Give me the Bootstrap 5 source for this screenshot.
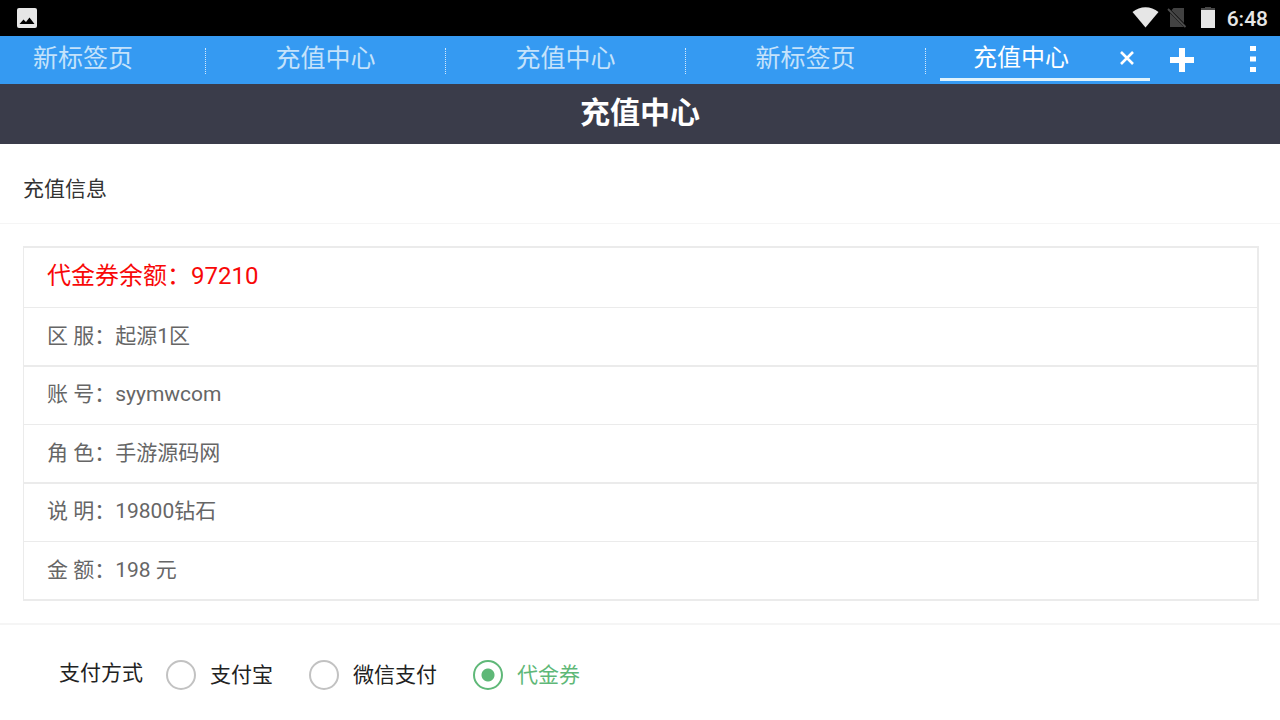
<!DOCTYPE html>
<html lang="zh-CN">
<head>
<meta charset="utf-8">
<meta name="viewport" content="width=device-width, initial-scale=1">
<title>充值中心</title>
<link href="https://cdn.jsdelivr.net/npm/bootstrap@5.3.0/dist/css/bootstrap.min.css" rel="stylesheet">
<style>
body { font-family: Roboto, "Noto Sans CJK SC", sans-serif; font-size: 21px; line-height: 30px; color: #333; background: #fff; }
.status-bar { height: 36px; background: #000; color: #e6e6e6; padding: 0 12px 0 17px; }
.clock { font-size: 21px; font-weight: 500; line-height: 36px; padding-top: 2px; }
.tab-strip { height: 48px; background: #359af2; }
.tab-strip button { border: 0; background: none; padding: 0; color: #fff; }
.tab-strip .page-tab { flex: 239 1 0; height: 48px; font-size: 25px; line-height: 36px; padding-bottom: 2px; color: #c4e2fb; }
.tab-strip .first-tab { flex-grow: 205; text-align: left; text-indent: 33px; }
.tab-rule { width: 0; height: 26px; margin-top: 12px; border-left: 1px dotted #d3eafd; }
.active-tab { width: 210px; height: 45px; margin-left: 14px; padding: 2px 15px 0 33px; border-bottom: 3px solid #def2fd; }
.tab-strip .active-name { font-size: 24px; line-height: 36px; }
.add-tab { margin-left: 20px; }
.more-menu { margin: 0 24px 0 56px; }
.title-bar { background: #3a3c4a; color: #fff; height: 60px; font-size: 30px; font-weight: 700; line-height: 58px; }
.section-head { padding: 30px 23px 19px; border-bottom: 1px solid #f5f5f5; font-size: 21px; line-height: 30px; }
.info-wrap { padding: 22px 21px 22px 23px; border-bottom: 2px solid #f5f5f5; }
.info-list { --bs-list-group-border-radius: 0; border: solid #ebebeb; border-width: 2px 2px 2px 1px; }
.info-list .list-group-item { border: 0; padding: 13px 23px 14px; color: #666; line-height: 30px; }
.info-list .list-group-item + .list-group-item { border-top: 1px solid #ebebeb; }
.info-list .list-group-item:nth-child(odd):not(:first-child) { border-top-width: 2px; padding: 12px 23px 15px; }
.info-list .balance { font-size: 24px; color: #f80808; padding-bottom: 16px; }
.pay-form { padding: 33px 23px 30px 59px; color: #222; }
.pay-label { margin-right: 23px; font-size: 21px; line-height: 30px; }
.pay-option { margin-right: 36px; gap: 14px; padding-top: 2px; }
.pay-option .form-check-input { width: 30px; height: 30px; margin: 0; border: 2px solid #c2c2c2; background: #fff; flex: none; }
.pay-option .form-check-input:checked { border-color: #5fb878; background: radial-gradient(circle, #5fb878 6px, #fff 7px); }
.pay-option .form-check-input:checked + label { color: #5fb878; }
</style>
</head>
<body>
<div class="status-bar d-flex align-items-center">
  <svg width="20" height="20" viewBox="0 0 20 20" aria-hidden="true"><rect width="20" height="20" rx="2" fill="#e6e6e6"/><path d="M2.500 16 6.500 11.500l2.500 2.500 3.500-4.500L17.500 16z" fill="#000"/></svg>
  <div class="ms-auto d-flex align-items-center">
    <svg width="27" height="22" viewBox="0 0 27 22" aria-hidden="true"><path d="M.5 5C8-1.300 19-1.300 26.500 5L13.500 20.500z" fill="#e6e6e6"/></svg>
    <svg class="ms-2" width="20" height="22" viewBox="0 0 20 22" aria-hidden="true"><path d="M6.500 1H17v19H3V5z" fill="#424242"/><path d="M2 3l18 18" stroke="#000" stroke-width="3"/><path d="M1 2l17.500 18" stroke="#4c4c4c" stroke-width="1.800"/></svg>
    <svg width="14" height="22" viewBox="0 0 14 22" style="margin-left:14px" aria-hidden="true"><path d="M4 0h6v2H4zM0 1h14v2H0z" fill="#484848"/><path d="M0 3h14v18H0z" fill="#e6e6e6"/></svg>
    <span class="clock ps-1 ms-2">6:48</span>
  </div>
</div>

<nav class="tab-strip d-flex align-items-start" aria-label="标签页">
  <button type="button" class="page-tab first-tab">新标签页</button><span class="tab-rule"></span>
  <button type="button" class="page-tab">充值中心</button><span class="tab-rule"></span>
  <button type="button" class="page-tab">充值中心</button><span class="tab-rule"></span>
  <button type="button" class="page-tab">新标签页</button><span class="tab-rule"></span>
  <div class="active-tab d-flex justify-content-between align-items-center">
    <button type="button" class="active-name">充值中心</button>
    <button type="button" class="d-flex" aria-label="关闭"><svg width="16" height="16" viewBox="0 0 16 16"><path d="M2 2l12 12M14 2 2 14" stroke="#fff" stroke-width="2.600"/></svg></button>
  </div>
  <button type="button" class="add-tab d-flex align-self-center" aria-label="新建标签"><svg width="24" height="24" viewBox="0 0 24 24"><path d="M9 0h6v9h9v6h-9v9H9v-9H0V9h9z" fill="#fff"/></svg></button>
  <button type="button" class="more-menu d-flex align-self-center" aria-label="菜单"><svg width="6" height="28" viewBox="0 0 6 28"><path d="M0 0h6v5H0zM0 10.500h6v5H0zM0 21h6v5H0z" fill="#fff"/></svg></button>
</nav>

<header><h1 class="title-bar text-center m-0">充值中心</h1></header>

<main>
  <h2 class="section-head fw-normal m-0">充值信息</h2>
  <section class="info-wrap">
    <ul class="info-list list-group">
      <li class="list-group-item balance">代金券余额：97210</li>
      <li class="list-group-item">区 服：起源1区</li>
      <li class="list-group-item">账 号：syymwcom</li>
      <li class="list-group-item">角 色：手游源码网</li>
      <li class="list-group-item">说 明：19800钻石</li>
      <li class="list-group-item">金 额：198 元</li>
    </ul>
  </section>
  <form>
    <fieldset class="pay-form d-flex flex-wrap align-items-start" aria-labelledby="pay-title">
      <span class="pay-label" id="pay-title">支付方式</span>
      <div class="pay-option d-flex align-items-center"><input class="form-check-input" type="radio" name="pay" id="alipay"><label for="alipay">支付宝</label></div>
      <div class="pay-option d-flex align-items-center"><input class="form-check-input" type="radio" name="pay" id="wechat"><label for="wechat">微信支付</label></div>
      <div class="pay-option d-flex align-items-center"><input class="form-check-input" type="radio" name="pay" id="voucher" checked><label for="voucher">代金券</label></div>
    </fieldset>
  </form>
</main>
<script src="https://cdn.jsdelivr.net/npm/bootstrap@5.3.0/dist/js/bootstrap.bundle.min.js"></script>
</body>
</html>
